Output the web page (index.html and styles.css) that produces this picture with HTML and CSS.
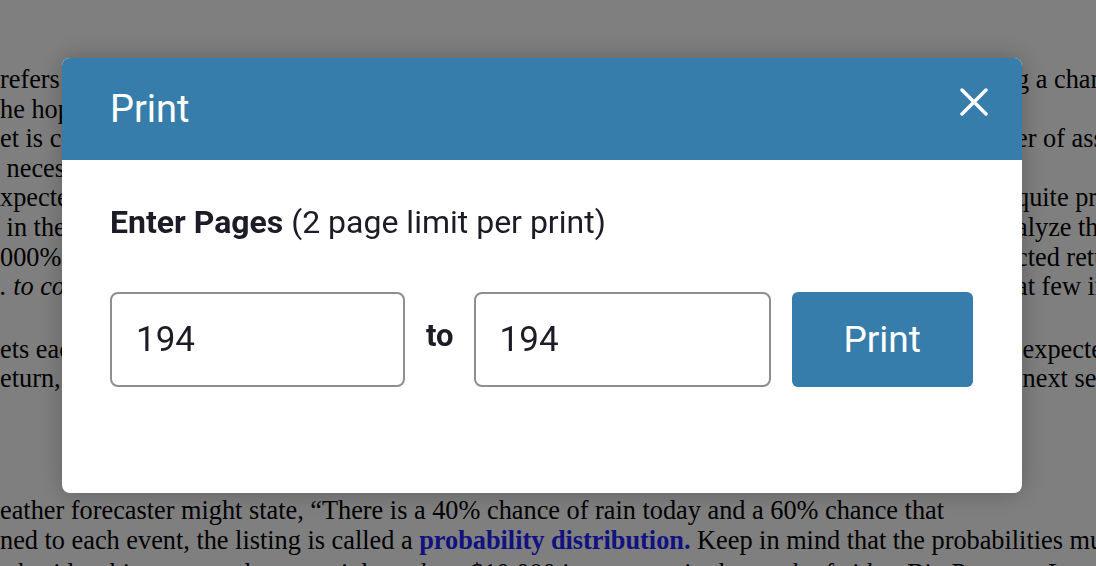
FILE: index.html
```html
<!DOCTYPE html>
<html lang="en">
<head>
<meta charset="utf-8">
<title>Print</title>
<link rel="stylesheet" href="styles.css">
</head>
<body>
<main class="doc">
  <section class="para">
    <div class="ln"><span class="l">refers to the chance of</span><span class="r">g a chance</span></div>
    <div class="ln"><span class="l">he hope</span><span class="r"></span></div>
    <div class="ln"><span class="l">et is con</span><span class="r">er of assets</span></div>
    <div class="ln"><span class="l"> necess</span><span class="r"></span></div>
    <div class="ln"><span class="l">xpected</span><span class="r">quite prof</span></div>
    <div class="ln"><span class="l"> in the</span><span class="r">alyze the</span></div>
    <div class="ln"><span class="l">000%</span><span class="r">cted retu</span></div>
    <div class="ln"><span class="l"><em>. to con</em></span><span class="r">at few in</span></div>
  </section>
  <section class="para">
    <div class="ln"><span class="l">ets eac</span><span class="r"> expected</span></div>
    <div class="ln"><span class="l">eturn, </span><span class="r"> next sec</span></div>
  </section>
  <section class="para last">
    <div class="full">eather forecaster might state, “There is a 40% chance of rain today and a 60% chance that</div>
    <div class="full">ned to each event, the listing is called a <a class="term" href="#">probability distribution.</a> Keep in mind that the probabilities must</div>
    <div class="full">e besides this, assume that we might make a $10,000 investment in the stock of either Big Pecos or Lo</div>
  </section>
</main>

<div class="backdrop">
  <div class="modal" role="dialog" aria-labelledby="ttl">
    <header class="modal-head">
      <h2 id="ttl" class="title">Print</h2>
      <button class="close" aria-label="Close">
        <svg viewBox="0 0 28 28" width="28" height="28"><path d="M2 2 L26 26 M26 2 L2 26" stroke="#fff" stroke-width="3.4" stroke-linecap="round" fill="none"/></svg>
      </button>
    </header>
    <div class="modal-body">
      <p class="label"><strong>Enter Pages</strong> (2 page limit per print)</p>
      <div class="row">
        <input class="field" type="text" value="194" aria-label="From page">
        <span class="to">to</span>
        <input class="field" type="text" value="194" aria-label="To page">
        <button class="print">Print</button>
      </div>
    </div>
  </div>
</div>
</body>
</html>
```
FILE: styles.css
```css
html, body {
  margin: 0;
  height: 566px;
  overflow: hidden;
}
body {
  background: #fff;
  color: #000;
  font-family: "Liberation Serif", "Times New Roman", serif;
  font-size: 26.3px;
  line-height: 30px;
}
.doc {
  padding-top: 65px;
}
.para {
  margin: 0 0 33px;
}
.para.last {
  margin-top: 102px;
}
.ln {
  display: grid;
  grid-template-columns: 1016px 80px;
  height: 29.6px;
  white-space: pre;
}
.ln .l, .ln .r {
  overflow: hidden;
}
.full {
  white-space: nowrap;
  overflow: hidden;
  height: 30px;
}
.full + .full + .full {
  margin-top: 3px;
}
.term {
  color: #2222ff;
  font-weight: bold;
  text-decoration: none;
}

.backdrop {
  position: fixed;
  inset: 0;
  background: rgba(0, 0, 0, 0.5);
  display: flex;
  align-items: flex-start;
  padding: 58px 0 0 62px;
}
.modal {
  width: 960px;
  height: 435px;
  background: #fff;
  border-radius: 8px;
  overflow: hidden;
  box-shadow: 0 0 24px rgba(0, 0, 0, 0.25);
  font-family: Roboto, "Liberation Sans", sans-serif;
  color: #1c1c27;
}
.modal-head {
  height: 102px;
  background: #377dab;
  display: flex;
  justify-content: space-between;
  padding: 0 34px 0 48px;
}
.title {
  margin: 0;
  font-size: 38px;
  font-weight: 400;
  color: #fff;
  align-self: center;
}
.close {
  margin-top: 30px;
  width: 28px;
  height: 28px;
  padding: 0;
  border: 0;
  background: none;
  align-self: flex-start;
}
.close svg {
  display: block;
}
.modal-body {
  padding: 43px 48px 0;
}
.label {
  margin: 0;
  font-size: 32px;
  line-height: 38px;
}
.label strong {
  font-weight: 700;
}
.row {
  margin-top: 51px;
  display: flex;
  align-items: center;
}
.field {
  box-sizing: border-box;
  width: 295px;
  height: 95px;
  border: 2px solid #8e8e8e;
  border-radius: 8px;
  padding: 0 24px;
  font-family: Roboto, "Liberation Sans", sans-serif;
  font-size: 35px;
  color: #1c1c27;
  background: #fff;
  outline: none;
}
.field + .to + .field {
  width: 297px;
}
.to {
  font-size: 31px;
  font-weight: 700;
  margin: 0 20px 0 21px;
  padding-bottom: 8px;
}
.print {
  margin-left: 21px;
  width: 181px;
  height: 95px;
  border: 0;
  border-radius: 6px;
  background: #377dab;
  color: #fff;
  font-family: Roboto, "Liberation Sans", sans-serif;
  font-size: 37px;
}
```
